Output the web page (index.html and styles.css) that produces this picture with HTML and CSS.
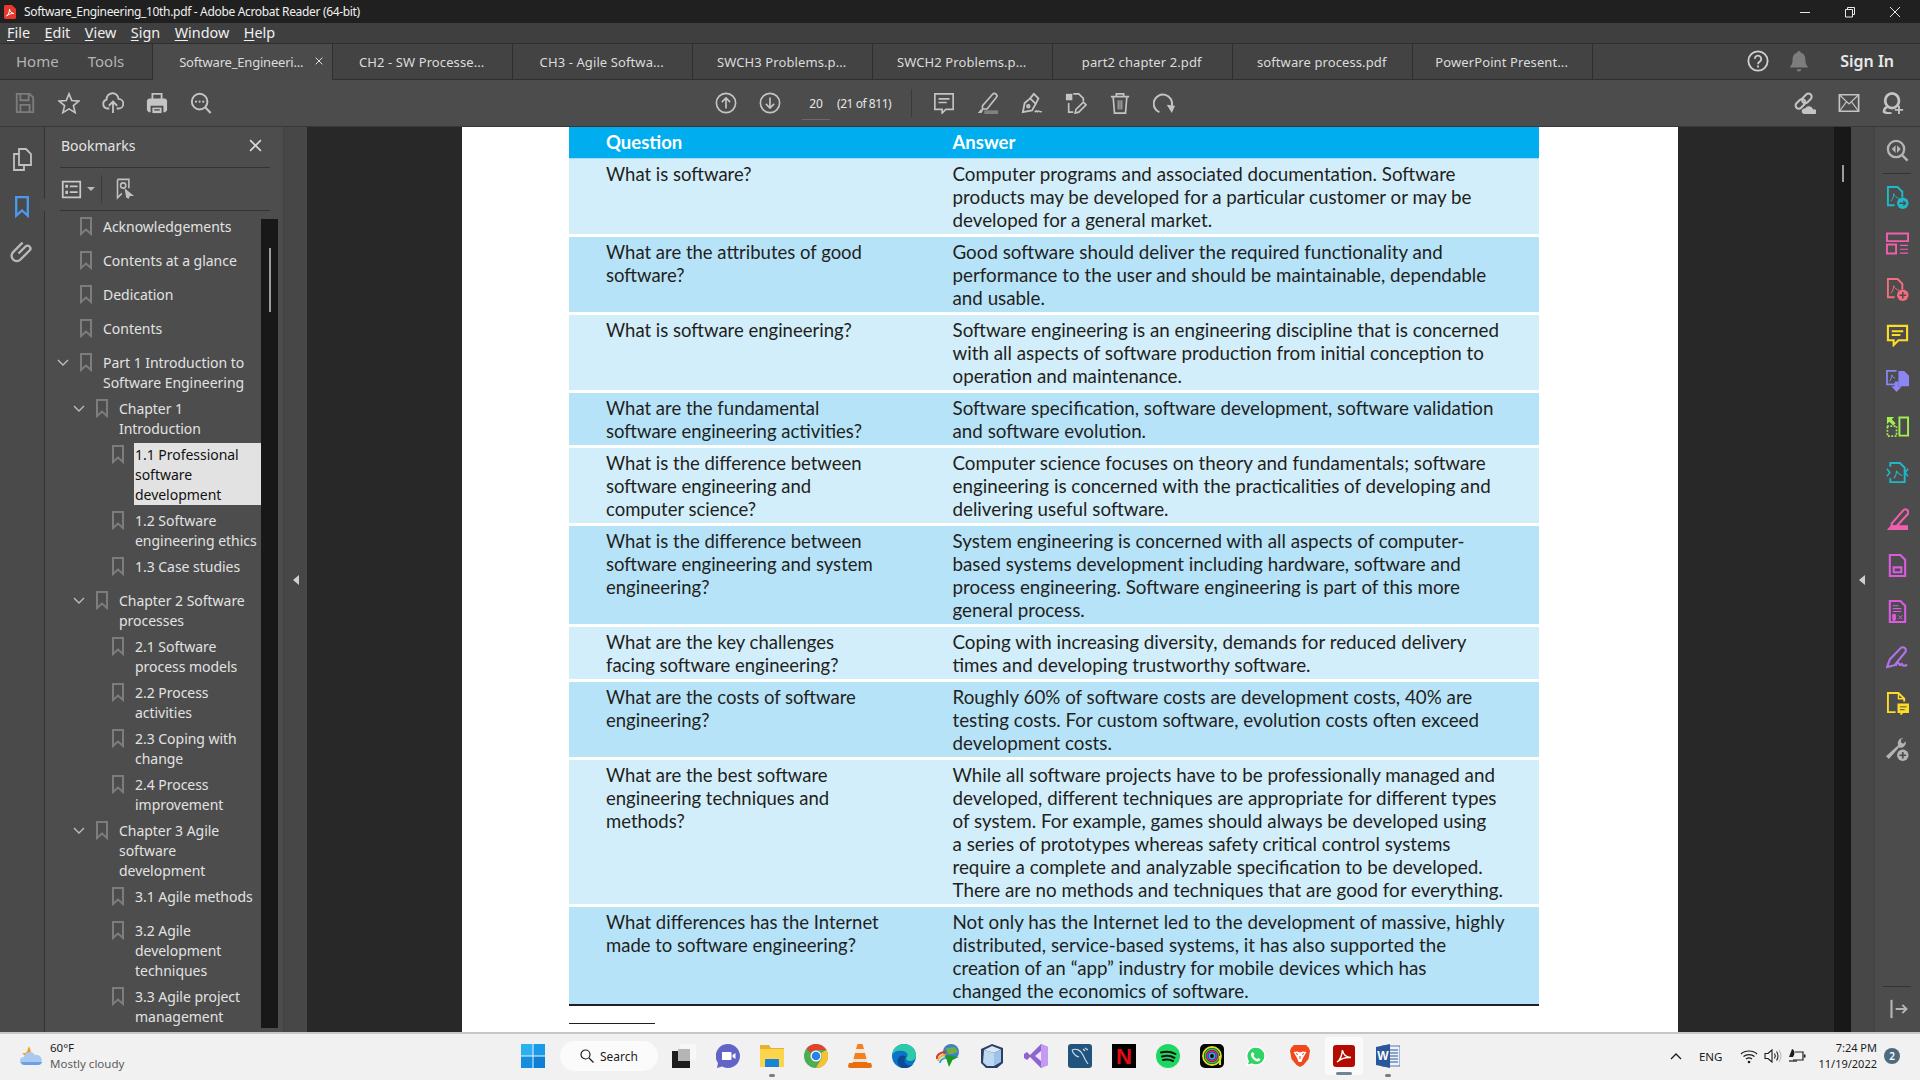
FILE: index.html
```html
<!DOCTYPE html>
<html lang="en">
<head>
<meta charset="utf-8">
<title>Software_Engineering_10th.pdf - Adobe Acrobat Reader (64-bit)</title>
<link rel="stylesheet" href="styles.css">
</head>
<body>
<svg class="defs" xmlns="http://www.w3.org/2000/svg">
  <symbol id="bm" viewBox="0 0 12 19"><path d="M1 1h10v16l-5-4.500L1 17z" fill="none" stroke="currentColor" stroke-width="2"/></symbol>
  <symbol id="chev" viewBox="0 0 12 7"><path d="M1 1l5 5 5-5" fill="none" stroke="currentColor" stroke-width="1.400"/></symbol>
  <symbol id="save" viewBox="0 0 24 24"><g fill="none" stroke="currentColor" stroke-width="2"><path d="M3 2h14l4 4v16H3z"/><path d="M7 2v7h9V2M7 22v-8h10v8"/></g></symbol>
  <symbol id="star" viewBox="0 0 24 24"><path d="M12 2l3 7.300 7.700.6-5.900 5 1.900 7.600L12 18.400 5.300 22.500l1.900-7.600-5.900-5L9 9.300z" fill="none" stroke="currentColor" stroke-width="1.800"/></symbol>
  <symbol id="cloud" viewBox="0 0 24 24"><g fill="none" stroke="currentColor" stroke-width="2"><path d="M8 18H6a5 5 0 0 1-1-9.800A6.500 6.500 0 0 1 18 7.500 5.200 5.200 0 0 1 18 18h-2"/><path d="M12 23V11M7.500 15l4.500-4.500 4.500 4.500"/></g></symbol>
  <symbol id="print" viewBox="0 0 24 24"><path d="M6 1h12v6h3l2 2v11l-2 2h-2v-7H5v7H3l-2-2V9l2-2h3zM8 3v4h8V3z" fill="currentColor" fill-rule="evenodd"/><path d="M7 17h10v6H7z" fill="currentColor"/><path d="M9 19.500h6" stroke="#4c4c4c" stroke-width="1.500"/></symbol>
  <symbol id="zoomdots" viewBox="0 0 24 24"><circle cx="10.500" cy="10.500" r="8.500" fill="none" stroke="currentColor" stroke-width="2.200"/><path d="M16.500 16.500l6 6.500" stroke="currentColor" stroke-width="2.400"/><circle cx="6.500" cy="10.500" r="1.200" fill="currentColor"/><circle cx="10.500" cy="10.500" r="1.200" fill="currentColor"/><circle cx="14.500" cy="10.500" r="1.200" fill="currentColor"/></symbol>
  <symbol id="up" viewBox="0 0 24 24"><circle cx="12" cy="12" r="10.500" fill="none" stroke="currentColor" stroke-width="1.800"/><path d="M12 18V6.500M7.500 11L12 6.500l4.500 4.500" fill="none" stroke="currentColor" stroke-width="1.800"/></symbol>
  <symbol id="down" viewBox="0 0 24 24"><circle cx="12" cy="12" r="10.500" fill="none" stroke="currentColor" stroke-width="1.800"/><path d="M12 6v11.500M7.500 13l4.500 4.500 4.500-4.500" fill="none" stroke="currentColor" stroke-width="1.800"/></symbol>
  <symbol id="comment" viewBox="0 0 24 24"><g fill="none" stroke="currentColor" stroke-width="1.800"><path d="M2 2h20v17h-8l-4 4v-4H2z"/><path d="M6 7.500h12M6 11.500h9"/></g></symbol>
  <symbol id="hl" viewBox="0 0 24 24"><path d="M6 15L17 2.500a2.500 2.500 0 0 1 4 3.500L11 18.500H6z" fill="none" stroke="currentColor" stroke-width="1.800"/><path d="M1 23l3-4h3l-2 4z" fill="currentColor"/><path d="M8 20h15v4H8z" fill="currentColor" opacity=".45"/></symbol>
  <symbol id="pen" viewBox="0 0 24 24"><g fill="none" stroke="currentColor" stroke-width="2"><path d="M2 22l2-10 6-5 6 6-4 7z"/><path d="M10 7l4-5 5 5-3 6"/><circle cx="8" cy="15.500" r="1.400"/><path d="M15 22c1-1 1.500-2 2-1s1 1 1.500 0 1 0 2 .5 1.500 0 2-.5" stroke-width="1.600"/></g></symbol>
  <symbol id="stamp" viewBox="0 0 24 24"><path d="M1 2h7v7H1z" fill="currentColor"/><g fill="none" stroke="currentColor" stroke-width="1.800"><path d="M9 2h6l5 5v3M4 12v10h5"/><path d="M11 23l1-4 8-8 3 3-8 8z"/></g></symbol>
  <symbol id="trash" viewBox="0 0 24 24"><g fill="none" stroke="currentColor" stroke-width="1.800"><path d="M2 5h20M8 5V2h8v3M4.500 5L6 23h12l1.500-18"/><path d="M10 9v10M12 9v10M14 9v10" stroke-width="1"/></g></symbol>
  <symbol id="rotate" viewBox="0 0 24 24"><path d="M7 22A10 10 0 1 1 20.500 15" fill="none" stroke="currentColor" stroke-width="2.200"/><path d="M15 14l5.500 9 3.500-8z" fill="currentColor"/></symbol>
  <symbol id="link" viewBox="0 0 24 24"><g fill="none" stroke="currentColor" stroke-width="2.200"><rect x="1" y="9.500" width="12" height="7" rx="3.500" transform="rotate(-45 7 13)"/><rect x="8" y="3.500" width="12" height="7" rx="3.500" transform="rotate(-45 14 7)"/></g><path d="M11 24a3 3 0 0 1 1-6 5 5 0 0 1 9 1 2.600 2.600 0 0 1 2 5z" fill="currentColor"/></symbol>
  <symbol id="mail" viewBox="0 0 24 24"><g fill="none" stroke="currentColor" stroke-width="1.800"><path d="M1.500 3h21v18h-21z"/><path d="M1.500 3L12 13 22.500 3M1.500 21L9 11M22.500 21L15 11" stroke-width="1.300"/></g></symbol>
  <symbol id="user" viewBox="0 0 24 24"><g fill="none" stroke="currentColor"><ellipse cx="11" cy="9.500" rx="7.500" ry="8" stroke-width="3"/><path d="M6 16c-3 1.500-4 3.500-4 5.500 2 1.500 5 2 8.500 2" stroke-width="2.600"/></g><path d="M18.500 15v9M14 19.500h9" stroke="currentColor" stroke-width="2"/></symbol>
  <symbol id="help" viewBox="0 0 24 24"><circle cx="12" cy="12" r="10.500" fill="none" stroke="currentColor" stroke-width="2"/><path d="M8.500 9.500a3.500 3.500 0 1 1 5.500 3c-1.500 1-2 1.500-2 3" fill="none" stroke="currentColor" stroke-width="2"/><path d="M11 17h2v2h-2z" fill="currentColor"/></symbol>
  <symbol id="bell" viewBox="0 0 24 24"><path d="M12 1a2 2 0 0 1 2 2c4 1 5 4 5 8 0 5 2 6 3 8H2c1-2 3-3 3-8 0-4 1-7 5-8a2 2 0 0 1 2-2zM9.500 21h5a2.500 2.500 0 0 1-5 0z" fill="currentColor"/></symbol>
  <symbol id="close" viewBox="0 0 12 12"><path d="M1 1l10 10M11 1L1 11" fill="none" stroke="currentColor" stroke-width="1.500"/></symbol>
  <symbol id="pages" viewBox="0 0 24 24"><g fill="none" stroke="currentColor" stroke-width="1.800"><path d="M9 18V2h7l5 5v11z"/><path d="M9 7H4v16h10v-5"/></g></symbol>
  <symbol id="clip" viewBox="0 0 24 24"><path d="M8.500 14.500l7-7a2.800 2.800 0 0 1 4 4l-9 9a5.200 5.200 0 0 1-7.400-7.400l9.500-9.500" fill="none" stroke="currentColor" stroke-width="2.400"/></symbol>
  <symbol id="listv" viewBox="0 0 24 24"><g fill="none" stroke="currentColor" stroke-width="2"><path d="M2 3h20v18H2z"/><path d="M10 8.500h9M10 15h9"/></g><path d="M5 6.500h3v3.500H5zM5 13.500h3V17H5z" fill="currentColor"/></symbol>
  <symbol id="bmgear" viewBox="0 0 24 24"><g fill="none" stroke="currentColor" stroke-width="1.800"><path d="M4 1h13v10M4 1v21l5-5"/><circle cx="10.500" cy="8" r="3"/></g><path d="M12 11l11 9-5 0-1 3-3-1z" fill="currentColor"/></symbol>

  <symbol id="r-zoom" viewBox="0 0 24 24"><circle cx="10.500" cy="10.500" r="8.500" fill="none" stroke="currentColor" stroke-width="2.400"/><path d="M16.500 16.500l6 6" stroke="currentColor" stroke-width="2.600"/><path d="M10 6.500v8L6 10.500zM11.500 6.500v8l4-4z" fill="currentColor"/></symbol>
  <symbol id="r-export" viewBox="0 0 24 24"><g fill="none" stroke="currentColor" stroke-width="2"><path d="M9 20H2V1h10l5 5v6"/><path d="M5 16c2-2 3-5 3-8 1 3 3 4 6 5" stroke-width="1"/></g><circle cx="17.500" cy="18" r="6" fill="currentColor"/><path d="M14 18h6M18 15.500l2.500 2.500-2.500 2.500" fill="none" stroke="#4c4c4c" stroke-width="1.400"/></symbol>
  <symbol id="r-layout" viewBox="0 0 24 24"><g fill="none" stroke="currentColor" stroke-width="2"><path d="M1 1.500h22v8H1zM1 13h9.500v9.500H1z"/><path d="M14.500 14h8.500M14.500 18h8.500M14.500 22h8.500" stroke-width="1.200"/></g></symbol>
  <symbol id="r-create" viewBox="0 0 24 24"><g fill="none" stroke="currentColor" stroke-width="2"><path d="M9 20H2V1h10l5 5v6"/><path d="M5 16c2-2 3-5 3-8 1 3 3 4 6 5" stroke-width="1"/></g><circle cx="17.500" cy="18" r="6" fill="currentColor"/><path d="M14 18h7M17.500 14.500v7" stroke="#4c4c4c" stroke-width="1.600"/></symbol>
  <symbol id="r-comment" viewBox="0 0 24 24"><g fill="none" stroke="currentColor" stroke-width="2.200"><path d="M2 2h20v15h-9l-5 5v-5H2z"/><path d="M6 7.500h12M6 11.500h9"/></g></symbol>
  <symbol id="r-compress" viewBox="0 0 24 24"><g fill="none" stroke="currentColor" stroke-width="1.800"><path d="M10 15H1V1h10"/><path d="M3.500 12c1.500-2 2.500-4 2.500-7 .5 2 1.500 3 3.500 3.500" stroke-width="1"/></g><path d="M13 1h6l5 5v11H13z" fill="currentColor"/><path d="M9 12h4v5h3.500L11 23 5.500 17H9z" fill="currentColor"/></symbol>
  <symbol id="r-crop" viewBox="0 0 24 24"><g fill="none" stroke="currentColor"><path d="M14 1.500h9v19h-9z" stroke-width="2"/><path d="M1.500 11v10h9.500V11" stroke-width="1.800" stroke-dasharray="2 1.500"/><path d="M1 10.500h9" stroke-width="1.800" stroke-dasharray="2 1.500"/></g><path d="M1 1l7.500 0-2.500 2.500L10 7.500 7.500 10 3.500 6 1 8.500z" fill="currentColor"/></symbol>
  <symbol id="r-redact" viewBox="0 0 24 24"><g fill="none" stroke="currentColor" stroke-width="2"><path d="M4.500 5V1h10l5 5v15h-15v-4"/><path d="M8 17c2-2 3-5 3-8 1 3 3 4 6 5" stroke-width="1.100"/><path d="M1 7l3 4-3 4M23 7l-3 4 3 4" stroke-width="1.600"/></g></symbol>
  <symbol id="r-hl" viewBox="0 0 24 24"><path d="M6 16L18 2.500a3 3 0 0 1 4.500 4L11 19H6z" fill="none" stroke="currentColor" stroke-width="2.200"/><path d="M1 23l4-5h18v5z" fill="currentColor"/></symbol>
  <symbol id="r-form" viewBox="0 0 24 24"><g fill="none" stroke="currentColor" stroke-width="2.200"><path d="M4 1h11l5 5v17H4z"/><path d="M8 14h8v5H8z"/></g></symbol>
  <symbol id="r-fill" viewBox="0 0 24 24"><g fill="none" stroke="currentColor" stroke-width="2.200"><path d="M4 1h11l5 5v17H4z"/><path d="M7 6h6M7 9h9M7 12h9" stroke-width="1.200"/></g><path d="M7 15h3v5l-1.500 2L7 20zM13 16l4 4M17 16l-4 4" fill="currentColor" stroke="currentColor" stroke-width="1"/></symbol>
  <symbol id="r-sign" viewBox="0 0 24 24"><g fill="none" stroke="currentColor" stroke-width="2.200"><path d="M1 22l3-8L15 2.500a3 3 0 0 1 5 4L9 20z"/><path d="M10 21c2-5 3-4 3.500-2.500s1.500 2 2.500.5 1 1 2 1.500 2 0 4-1"/></g></symbol>
  <symbol id="r-note" viewBox="0 0 24 24"><g fill="none" stroke="currentColor" stroke-width="2"><path d="M10 21H2V1h11l6 6v3"/><path d="M13 1v6h6" stroke-width="1.500"/></g><path d="M12 12h12v10h-6l-3 3v-3h-3z" fill="currentColor"/><path d="M14.500 15.500h7M14.500 18.500h5" stroke="#4c4c4c" stroke-width="1"/></symbol>
  <symbol id="r-tools" viewBox="0 0 24 24"><path d="M18.500 0a5.500 5.500 0 0 0-5.800 7.500L0 19l3 3L13.500 10a5.500 5.500 0 0 0 7-6.500L18 6l-2.500-1.500L16 1z" fill="currentColor"/><circle cx="17.500" cy="18" r="6" fill="currentColor"/><path d="M14 18h7M17.500 14.500v7" stroke="#4c4c4c" stroke-width="1.800"/></symbol>
  <symbol id="r-hide" viewBox="0 0 24 24"><path d="M3 1v22" stroke="currentColor" stroke-width="2.600" fill="none"/><path d="M8 12h13M16 7l5 5-5 5" stroke="currentColor" stroke-width="2.400" fill="none"/></symbol>
</svg>

<div class="app">
  <header class="titlebar">
    <svg class="title-ic" viewBox="0 0 12 14"><path d="M0 1l1-1h7l4 4v9l-1 1H1l-1-1z" fill="#e8372c"/><path d="M2.500 11c2-1.500 3-4 3-7 .3 2.500 1.500 4 4.500 4.500-3-.2-5.500.8-7.500 2.500z" fill="none" stroke="#fff" stroke-width="1"/></svg>
    <span class="title-text">Software_Engineering_10th.pdf - Adobe Acrobat Reader (64-bit)</span>
    <div class="winctl">
      <svg class="wc" viewBox="0 0 12 12"><path d="M1 6.500h10" stroke="#e8e8e8" stroke-width="1"/></svg>
      <svg class="wc" viewBox="0 0 12 12"><path d="M1.500 3.500h7v7.500h-7zM3.500 3.500V1.500h7v7h-2" fill="none" stroke="#e8e8e8" stroke-width="1"/></svg>
      <svg class="wc" viewBox="0 0 12 12"><path d="M1 1l10 10M11 1L1 11" stroke="#e8e8e8" stroke-width="1"/></svg>
    </div>
  </header>

  <nav class="menubar">
    <span class="menu"><u>F</u>ile</span>
    <span class="menu"><u>E</u>dit</span>
    <span class="menu"><u>V</u>iew</span>
    <span class="menu"><u>S</u>ign</span>
    <span class="menu"><u>W</u>indow</span>
    <span class="menu"><u>H</u>elp</span>
  </nav>

  <div class="tabbar">
    <span class="hometab t-home">Home</span>
    <span class="hometab t-tools">Tools</span>
    <div class="tab active"><span>Software_Engineeri...</span><svg class="tabx" viewBox="0 0 12 12"><use href="#close"/></svg></div>
    <div class="tab"><span>CH2 - SW Processe...</span></div>
    <div class="tab"><span>CH3 - Agile Softwa...</span></div>
    <div class="tab"><span>SWCH3 Problems.p...</span></div>
    <div class="tab"><span>SWCH2 Problems.p...</span></div>
    <div class="tab"><span>part2 chapter 2.pdf</span></div>
    <div class="tab"><span>software process.pdf</span></div>
    <div class="tab"><span>PowerPoint Present...</span></div>
    <div class="tab-right">
      <svg class="ti help"><use href="#help"/></svg>
      <svg class="ti bell"><use href="#bell"/></svg>
      <span class="signin">Sign In</span>
    </div>
  </div>

  <div class="toolbar">
    <div class="tgroup left">
      <div class="tbtn dim"><svg class="ti"><use href="#save"/></svg></div>
      <div class="tbtn"><svg class="ti"><use href="#star"/></svg></div>
      <div class="tbtn"><svg class="ti"><use href="#cloud"/></svg></div>
      <div class="tbtn"><svg class="ti"><use href="#print"/></svg></div>
      <div class="tbtn"><svg class="ti"><use href="#zoomdots"/></svg></div>
    </div>
    <div class="tgroup center">
      <div class="tbtn"><svg class="ti"><use href="#up"/></svg></div>
      <div class="tbtn"><svg class="ti"><use href="#down"/></svg></div>
      <span class="pageno">20</span>
      <span class="pagecount">(21 of 811)</span>
      <span class="tsep"></span>
      <div class="tbtn"><svg class="ti"><use href="#comment"/></svg></div>
      <div class="tbtn"><svg class="ti"><use href="#hl"/></svg></div>
      <div class="tbtn"><svg class="ti"><use href="#pen"/></svg></div>
      <div class="tbtn"><svg class="ti"><use href="#stamp"/></svg></div>
      <div class="tbtn"><svg class="ti"><use href="#trash"/></svg></div>
      <div class="tbtn"><svg class="ti"><use href="#rotate"/></svg></div>
    </div>
    <div class="tgroup right">
      <div class="tbtn"><svg class="ti"><use href="#link"/></svg></div>
      <div class="tbtn"><svg class="ti"><use href="#mail"/></svg></div>
      <div class="tbtn"><svg class="ti"><use href="#user"/></svg></div>
    </div>
  </div>

  <main class="main">
    <aside class="rail">
      <svg class="ri pages"><use href="#pages"/></svg>
      <svg class="ri bmk"><use href="#bm"/></svg>
      <svg class="ri clip"><use href="#clip"/></svg>
      <span class="notch"></span>
    </aside>

    <section class="panel">
      <div class="panel-head">
        <span class="panel-title">Bookmarks</span>
        <svg class="panel-x"><use href="#close"/></svg>
      </div>
      <div class="panel-tools">
        <svg class="pt-list"><use href="#listv"/></svg>
        <span class="pt-caret"></span>
        <span class="pt-sep"></span>
        <svg class="pt-gear"><use href="#bmgear"/></svg>
      </div>
      <div class="panel-body">
        <div class="tree">
          <div class="bm-item l0"><span class="chev"></span><svg class="bm-ic"><use href="#bm"/></svg><span class="bm-text">Acknowledgements</span></div>
          <div class="bm-item l0"><span class="chev"></span><svg class="bm-ic"><use href="#bm"/></svg><span class="bm-text">Contents at a glance</span></div>
          <div class="bm-item l0"><span class="chev"></span><svg class="bm-ic"><use href="#bm"/></svg><span class="bm-text">Dedication</span></div>
          <div class="bm-item l0"><span class="chev"></span><svg class="bm-ic"><use href="#bm"/></svg><span class="bm-text">Contents</span></div>
          <div class="bm-item l0"><span class="chev"><svg class="chev-ic"><use href="#chev"/></svg></span><svg class="bm-ic"><use href="#bm"/></svg><span class="bm-text">Part 1 Introduction to<br>Software Engineering</span></div>
          <div class="bm-item l1"><span class="chev"><svg class="chev-ic"><use href="#chev"/></svg></span><svg class="bm-ic"><use href="#bm"/></svg><span class="bm-text">Chapter 1<br>Introduction</span></div>
          <div class="bm-item l2"><span class="chev"></span><svg class="bm-ic"><use href="#bm"/></svg><span class="bm-text sel">1.1 Professional<br>software<br>development</span></div>
          <div class="bm-item l2"><span class="chev"></span><svg class="bm-ic"><use href="#bm"/></svg><span class="bm-text">1.2 Software<br>engineering ethics</span></div>
          <div class="bm-item l2"><span class="chev"></span><svg class="bm-ic"><use href="#bm"/></svg><span class="bm-text">1.3 Case studies</span></div>
          <div class="bm-item l1"><span class="chev"><svg class="chev-ic"><use href="#chev"/></svg></span><svg class="bm-ic"><use href="#bm"/></svg><span class="bm-text">Chapter 2 Software<br>processes</span></div>
          <div class="bm-item l2"><span class="chev"></span><svg class="bm-ic"><use href="#bm"/></svg><span class="bm-text">2.1 Software<br>process models</span></div>
          <div class="bm-item l2"><span class="chev"></span><svg class="bm-ic"><use href="#bm"/></svg><span class="bm-text">2.2 Process<br>activities</span></div>
          <div class="bm-item l2"><span class="chev"></span><svg class="bm-ic"><use href="#bm"/></svg><span class="bm-text">2.3 Coping with<br>change</span></div>
          <div class="bm-item l2"><span class="chev"></span><svg class="bm-ic"><use href="#bm"/></svg><span class="bm-text">2.4 Process<br>improvement</span></div>
          <div class="bm-item l1"><span class="chev"><svg class="chev-ic"><use href="#chev"/></svg></span><svg class="bm-ic"><use href="#bm"/></svg><span class="bm-text">Chapter 3 Agile<br>software<br>development</span></div>
          <div class="bm-item l2"><span class="chev"></span><svg class="bm-ic"><use href="#bm"/></svg><span class="bm-text">3.1 Agile methods</span></div>
          <div class="bm-item l2"><span class="chev"></span><svg class="bm-ic"><use href="#bm"/></svg><span class="bm-text">3.2 Agile<br>development<br>techniques</span></div>
          <div class="bm-item l2"><span class="chev"></span><svg class="bm-ic"><use href="#bm"/></svg><span class="bm-text">3.3 Agile project<br>management</span></div>
        </div>
        <div class="panel-scroll"><span class="panel-thumb"></span></div>
      </div>
    </section>

    <div class="strip strip-l"><span class="tri-l"></span></div>

    <div class="doc">
      <article class="page">
        <div class="row head"><div class="q">Question</div><div class="a">Answer</div></div>
        <div class="row light"><div class="q">What is software?</div><div class="a">Computer programs and associated documentation. Software<br>products may be developed for a particular customer or may be<br>developed for a general market.</div></div>
        <div class="row dark"><div class="q">What are the attributes of good<br>software?</div><div class="a">Good software should deliver the required functionality and<br>performance to the user and should be maintainable, dependable<br>and usable.</div></div>
        <div class="row light"><div class="q">What is software engineering?</div><div class="a">Software engineering is an engineering discipline that is concerned<br>with all aspects of software production from initial conception to<br>operation and maintenance.</div></div>
        <div class="row dark"><div class="q">What are the fundamental<br>software engineering activities?</div><div class="a">Software specification, software development, software validation<br>and software evolution.</div></div>
        <div class="row light"><div class="q">What is the difference between<br>software engineering and<br>computer science?</div><div class="a">Computer science focuses on theory and fundamentals; software<br>engineering is concerned with the practicalities of developing and<br>delivering useful software.</div></div>
        <div class="row dark"><div class="q">What is the difference between<br>software engineering and system<br>engineering?</div><div class="a">System engineering is concerned with all aspects of computer-<br>based systems development including hardware, software and<br>process engineering. Software engineering is part of this more<br>general process.</div></div>
        <div class="row light"><div class="q">What are the key challenges<br>facing software engineering?</div><div class="a">Coping with increasing diversity, demands for reduced delivery<br>times and developing trustworthy software.</div></div>
        <div class="row dark"><div class="q">What are the costs of software<br>engineering?</div><div class="a">Roughly 60% of software costs are development costs, 40% are<br>testing costs. For custom software, evolution costs often exceed<br>development costs.</div></div>
        <div class="row light"><div class="q">What are the best software<br>engineering techniques and<br>methods?</div><div class="a">While all software projects have to be professionally managed and<br>developed, different techniques are appropriate for different types<br>of system. For example, games should always be developed using<br>a series of prototypes whereas safety critical control systems<br>require a complete and analyzable specification to be developed.<br>There are no methods and techniques that are good for everything.</div></div>
        <div class="row dark last"><div class="q">What differences has the Internet<br>made to software engineering?</div><div class="a">Not only has the Internet led to the development of massive, highly<br>distributed, service-based systems, it has also supported the<br>creation of an “app” industry for mobile devices which has<br>changed the economics of software.</div></div>
        <div class="footrule"></div>
      </article>
    </div>

    <div class="vscroll"><span class="vthumb"></span></div>
    <div class="strip strip-r"><span class="tri-r"></span></div>

    <aside class="rrail">
      <svg class="rr c-gray"><use href="#r-zoom"/></svg>
      <span class="rr-line"></span>
      <svg class="rr c-teal"><use href="#r-export"/></svg>
      <svg class="rr c-pink"><use href="#r-layout"/></svg>
      <svg class="rr c-salmon"><use href="#r-create"/></svg>
      <svg class="rr c-yellow"><use href="#r-comment"/></svg>
      <svg class="rr c-peri"><use href="#r-compress"/></svg>
      <svg class="rr c-lime"><use href="#r-crop"/></svg>
      <svg class="rr c-teal"><use href="#r-redact"/></svg>
      <svg class="rr c-pink"><use href="#r-hl"/></svg>
      <svg class="rr c-mag"><use href="#r-form"/></svg>
      <svg class="rr c-mag"><use href="#r-fill"/></svg>
      <svg class="rr c-purple"><use href="#r-sign"/></svg>
      <svg class="rr c-yellow"><use href="#r-note"/></svg>
      <svg class="rr c-gray"><use href="#r-tools"/></svg>
      <span class="rr-line bottom"></span>
      <svg class="rr c-gray hide"><use href="#r-hide"/></svg>
    </aside>
  </main>

  <footer class="taskbar">
    <div class="weather">
      <svg class="w-ic" viewBox="0 0 24 20"><path d="M3 7c3 1 5 0 6-4 0-1 1-2 1-3 1 3 3 6 1 9-2 2-6 1-8-2z" fill="#f39a1f"/><path d="M5 19a4 4 0 0 1 0-8 6 6 0 0 1 11-2 5 5 0 0 1 3 10z" fill="#a9c9f2"/><path d="M5 19h14a4 4 0 0 0 4-3H2a4 4 0 0 0 3 3z" fill="#6b9fe6"/></svg>
      <div class="w-text"><span class="w-temp">60°F</span><span class="w-desc">Mostly cloudy</span></div>
    </div>
    <div class="apps">
      <div class="app-cell"><svg class="tk" viewBox="0 0 24 24"><path d="M0 0h11.500v11.500H0z" fill="#2bb0f0"/><path d="M12.500 0H24v11.500H12.500z" fill="#1c9aea"/><path d="M0 12.500h11.500V24H0z" fill="#148fe0"/><path d="M12.500 12.500H24V24H12.500z" fill="#0d7fd6"/></svg></div>
      <div class="search-pill"><svg class="s-ic" viewBox="0 0 14 14"><circle cx="5.500" cy="5.500" r="4.500" fill="none" stroke="#1c1c1c" stroke-width="1.200"/><path d="M9 9l4.500 4.500" stroke="#1c1c1c" stroke-width="1.200"/></svg><span>Search</span></div>
      <div class="app-cell"><svg class="tk" viewBox="0 0 24 24"><path d="M8 0h16v16H8z" fill="#f7f7f7"/><path d="M0 7h18v17H0z" fill="#1d1d1d"/><path d="M6 5h12v12H6z" fill="#b5b5b5"/></svg></div>
      <div class="app-cell"><svg class="tk" viewBox="0 0 24 24"><path d="M12 0a12 12 0 1 1-6 22.400L1 24l1-5A12 12 0 0 1 12 0z" fill="#6264c8"/><path d="M6 8h8.500a1 1 0 0 1 1 1v6a1 1 0 0 1-1 1H6z" fill="#fff"/><path d="M16.500 11l3-2v6l-3-2z" fill="#fff"/></svg></div>
      <div class="app-cell ind"><svg class="tk" viewBox="0 0 24 24"><path d="M0 1h9l2 3h13v19H0z" fill="#e9b12c"/><path d="M0 5h24v18H0z" fill="#fcd54c"/><path d="M5 16a1 1 0 0 1 1-1h12a1 1 0 0 1 1 1v7H5z" fill="#1784d4"/></svg></div>
      <div class="app-cell"><svg class="tk" viewBox="0 0 24 24"><circle cx="12" cy="12" r="12" fill="#4cae4f"/><path d="M12 0a12 12 0 0 1 10.400 6H12a6 6 0 0 0-5.200 3L2.600 4.500A12 12 0 0 1 12 0z" fill="#e3402f"/><path d="M22.400 6A12 12 0 0 1 12 24l5.200-9a6 6 0 0 0 0-6z" fill="#fbc02d"/><circle cx="12" cy="12" r="5.500" fill="#fff"/><circle cx="12" cy="12" r="4.300" fill="#2f7fe8"/></svg></div>
      <div class="app-cell"><svg class="tk" viewBox="0 0 24 24"><path d="M9.500 0h5l1.500 5H8z" fill="#f7801a"/><path d="M8 5h8l1 4H7z" fill="#eaeaea"/><path d="M7 9h10l1.500 6h-13z" fill="#f7801a"/><path d="M5.500 15h13l1 3h-15z" fill="#e5e5e5"/><path d="M1 19h4l-.5-1h15l-.5 1h4l1 3a2 2 0 0 1-2 2H2a2 2 0 0 1-2-2z" fill="#e96f0d"/></svg></div>
      <div class="app-cell"><svg class="tk" viewBox="0 0 24 24"><circle cx="12" cy="12" r="12" fill="#0c74c8"/><path d="M0 11C1 4 6 0 12 0c7 0 12 5 12 11 0 4-3 6-6 6-2 0-4-1-4-3 2-1 3-6-3-7-5-1-9 0-11 4z" fill="#2dc9a8"/><path d="M10 24c-4-2-6-7-3-11 2-2 5-2 7 0-1 1-2 3-1 6 2 3 6 3 9 1-3 3-8 5-12 4z" fill="#0a4b94"/></svg></div>
      <div class="app-cell"><svg class="tk" viewBox="0 0 24 24"><circle cx="15" cy="8" r="8" fill="#3f7fc4"/><path d="M10 4l9-1 3 5-6 2-4 0z" fill="#6fae45"/><path d="M1 15a9 6 0 0 1 9-7" fill="none" stroke="#d33" stroke-width="2"/><path d="M2 17a8 6 0 0 1 8-6" fill="none" stroke="#ecb620" stroke-width="2"/><path d="M4 19a6 5 0 0 1 6-5" fill="none" stroke="#3aa1e0" stroke-width="2"/><path d="M9 11l14 2-6 2-4 8z" fill="#1a9a24"/></svg></div>
      <div class="app-cell"><svg class="tk" viewBox="0 0 24 24"><path d="M12 0l11 4v15l-6 5H6l-5-5V5z" fill="#2c3e63"/><path d="M12 2l9 3.500-7 3.500-10-3z" fill="#d7e7f7"/><path d="M14 9l7-3.500V18l-7 4z" fill="#9cc3ea"/><path d="M4 6l10 3v13H7l-4-3.500z" fill="#bfd8f1"/></svg></div>
      <div class="app-cell"><svg class="tk" viewBox="0 0 24 24"><path d="M17 0l7 3v18l-7 3L6 13l-3 3-3-2V10l3-2 3 3z" fill="#8f63d0"/><path d="M17 0l7 3v18l-7 3z" fill="#c49af2"/><path d="M17 7v10l-6-5z" fill="#efe5fb"/></svg></div>
      <div class="app-cell"><svg class="tk" viewBox="0 0 24 24"><rect width="24" height="24" rx="3" fill="#20537d"/><path d="M4 6c4-2 9 0 11 5s3 6 5 9M4 6c1 3 3 6 7 7M17 4l3 2M15 5l2 2" fill="none" stroke="#cfe0ec" stroke-width="1.100"/></svg></div>
      <div class="app-cell"><svg class="tk" viewBox="0 0 24 24"><rect width="24" height="24" fill="#000"/><text class="tk-n" x="12" y="20" text-anchor="middle">N</text></svg></div>
      <div class="app-cell"><svg class="tk" viewBox="0 0 24 24"><circle cx="12" cy="12" r="12" fill="#1ed760"/><path d="M5 8.500c5-1.500 10-1 14.500 1.500M6 12.500c4-1 9-.8 12.500 1.300M7 16c3.500-.8 7-.5 10 1" fill="none" stroke="#111" stroke-width="2" stroke-linecap="round"/></svg></div>
      <div class="app-cell"><svg class="tk" viewBox="0 0 24 24"><rect width="24" height="24" rx="5" fill="#050505"/><g fill="none" stroke-width="1.800"><circle cx="12" cy="12" r="9" stroke="#d9e021"/><circle cx="12" cy="12" r="6.800" stroke="#39b54a"/><circle cx="12" cy="12" r="4.800" stroke="#ec1c8e"/><circle cx="12" cy="12" r="2.800" stroke="#29a9e0"/></g><path d="M20 12v9" stroke="#d9e021" stroke-width="2"/></svg></div>
      <div class="app-cell"><svg class="tk" viewBox="0 0 24 24"><path d="M12 3a9 9 0 0 1 0 18 9 9 0 0 1-4-1l-5 1.300L4.300 17A9 9 0 0 1 12 3z" fill="#2fd366" stroke="#fff" stroke-width="1.300"/><path d="M9 8l1.500 2.500-1 1.300c1 1.800 2 2.700 3.500 3.300l1.200-1.100 2.300 1.300c-.5 2-2.500 2.500-4 2-3-1-5-3.500-5.500-6-.3-1.500.5-3 2-3.300z" fill="#fff"/></svg></div>
      <div class="app-cell"><svg class="tk" viewBox="0 0 24 24"><path d="M6 1h12l3 3 1 3-1.500 8-5 6L12 23l-3.500-2-5-6L2 7l1-3z" fill="#f2481e"/><path d="M5.500 8l4-.5 2.500 1 2.500-1 4 .5-3 5-1 2-1 3h-3l-1-3-1-2z" fill="#fff"/><path d="M8 9.500l2 1M16 9.500l-2 1M12 12v3" stroke="#f2481e" stroke-width="1"/></svg></div>
      <div class="app-cell hover wide-ind"><svg class="tk" viewBox="0 0 24 24"><rect width="22" height="22" x="1" y="1" rx="3" fill="#b30b00"/><path d="M5 18c3-2 5-7 5.500-12 .5 4 3 7 8.500 7.500-5-.5-10 1-14 4.500z" fill="none" stroke="#fff" stroke-width="1.500"/></svg></div>
      <div class="app-cell ind"><svg class="tk" viewBox="0 0 24 24"><path d="M6 2h18v20H6z" fill="#eef3fa" stroke="#2b579a" stroke-width=".8"/><path d="M14 6h8M14 9h8M14 12h8M14 15h8M14 18h8" stroke="#2b579a" stroke-width="1"/><path d="M0 3l14-3v24L0 21z" fill="#2b579a"/><text class="tk-w" x="7" y="16" text-anchor="middle">W</text></svg></div>
    </div>
    <div class="tray">
      <svg class="tr-chev" viewBox="0 0 12 7"><path d="M1 6l5-5 5 5" fill="none" stroke="#1c1c1c" stroke-width="1.300"/></svg>
      <span class="tr-lang">ENG</span>
      <svg class="tr-ic" viewBox="0 0 18 16"><g fill="none" stroke="#1c1c1c" stroke-width="1.200"><path d="M1 6c4-4 12-4 16 0M3.500 8.500c3-2.500 8-2.500 11 0M6 11c2-1.500 4-1.500 6 0"/></g><circle cx="9" cy="14" r="1.300" fill="#1c1c1c"/></svg>
      <svg class="tr-ic" viewBox="0 0 18 16"><path d="M1 5.500h3L8 2v12l-4-3.500H1z" fill="none" stroke="#1c1c1c" stroke-width="1.100"/><path d="M10.500 5.500c1 1.500 1 3.500 0 5M12.500 3.500c2 2.500 2 6.500 0 9" fill="none" stroke="#1c1c1c" stroke-width="1.100"/><path d="M15 2c2.500 3.500 2.500 8.500 0 12" fill="none" stroke="#bbb" stroke-width="1.100"/></svg>
      <svg class="tr-ic" viewBox="0 0 18 16"><path d="M7 4h8v8H5" fill="none" stroke="#1c1c1c" stroke-width="1.200"/><path d="M16 6.500h1.500v3H16z" fill="#1c1c1c"/><path d="M1 9l3-8c3 1 3 5 1 8z" fill="#1c1c1c"/><path d="M1 13h8" stroke="#1c1c1c" stroke-width="1.200"/></svg>
      <div class="clock"><span>7:24 PM</span><span>11/19/2022</span></div>
      <span class="badge">2</span>
    </div>
  </footer>
</div>
</body>
</html>
```

FILE: styles.css
```css
* { box-sizing: border-box; }
html, body { margin: 0; height: 100%; overflow: hidden; }
body { font-family: "Noto Sans", "Open Sans", sans-serif; color: #e6e6e6; background: #282828; }
.defs { display: none; }
.app { display: flex; flex-direction: column; height: 1080px; width: 1920px; }

/* title bar */
.titlebar { height: 23px; flex: none; background: #202020; display: flex; align-items: center; padding-left: 4px; }
.title-ic { width: 12px; height: 14px; margin-right: 8px; }
.title-text { font-size: 12px; color: #f0f0f0; line-height: 23px; letter-spacing: -.33px; }
.winctl { margin-left: auto; display: flex; padding-right: 19px; }
.wc { width: 12px; height: 12px; margin-left: 33px; }

/* menu */
.menubar { height: 21px; flex: none; background: #3f3f3f; border-bottom: 1px solid #2f2f2f; display: flex; gap: 14.500px; padding-left: 7px; font-size: 14.400px; line-height: 20px; color: #f0f0f0; }
.menu { display: block; }
.menu u { text-underline-offset: 2px; }

/* tabs */
.tabbar { height: 36px; flex: none; background: #434343; border-bottom: 1px solid #2f2f2f; display: flex; align-items: stretch; }
.hometab { font-size: 15px; color: #b4b4b4; line-height: 35px; }
.t-home { margin-left: 16px; }
.t-tools { margin-left: 29px; margin-right: 28px; }
.tab { width: 180px; border-left: 1px solid #2f2f2f; display: flex; align-items: center; justify-content: center; padding-right: 2px; font-size: 13px; letter-spacing: .1px; color: #dcdcdc; position: relative; }
.tab.active { background: #4b4b4b; margin-bottom: -1px; justify-content: flex-start; padding-left: 26px; letter-spacing: -.2px; }
.tabx { position: absolute; right: 9px; top: 13px; width: 8px; height: 8px; color: #e0e0e0; }
.tab-right { flex: 1; border-left: 1px solid #2f2f2f; display: flex; align-items: center; position: relative; }
.help { position: absolute; left: 154px; top: 6px; color: #d0d0d0; }
.bell { position: absolute; left: 195px; top: 6px; color: #7d7d7d; }
.signin { position: absolute; left: 247px; top: 0; line-height: 34px; font-size: 16px; font-weight: 600; color: #e8e8e8; }

/* toolbar */
.toolbar { height: 47px; flex: none; background: #4c4c4c; border-bottom: 1px solid #383838; display: flex; align-items: center; }
.tgroup { display: flex; align-items: center; }
.tgroup.left { margin-left: 3px; width: 701px; }
.tgroup.right { margin-left: auto; margin-right: 5px; }
.tbtn { width: 44px; height: 46px; display: flex; align-items: center; justify-content: center; color: #c4c4c4; }
.tbtn.dim { color: #7c7c7c; }
.ti { width: 22px; height: 22px; display: block; }
.pageno { width: 28px; margin-left: 10px; margin-top: 2px; text-align: center; font-size: 12px; line-height: 30px; color: #e6e6e6; border-bottom: 1px solid #6a6a6a; }
.pagecount { margin-left: 7px; width: 60px; font-size: 12px; color: #e6e6e6; letter-spacing: -.45px; white-space: nowrap; }
.tsep { width: 1px; height: 28px; background: #393939; margin-left: 14px; margin-right: 10px; }

/* main */
.main { flex: 1; min-height: 0; display: flex; overflow: hidden; background: #282828; }
.rail { width: 45px; flex: none; background: #4a4a4a; border-right: 1px solid #333; position: relative; display: flex; flex-direction: column; align-items: center; padding-top: 20px; }
.ri { width: 24px; height: 24px; flex: none; color: #c0c0c0; }
.ri.bmk { width: 14px; height: 22px; margin-top: 25px; color: #4a9bf0; }
.ri.clip { margin-top: 21px; color: #b8b8b8; }
.notch { position: absolute; right: -1px; top: 71px; width: 8px; height: 14px; background: #4d4d4d; clip-path: polygon(100% 0, 0 50%, 100% 100%); }

.panel { width: 239px; flex: none; background: #4d4d4d; display: flex; flex-direction: column; border-right: 1px solid #414141; }
.panel-head { height: 41px; flex: none; margin: 0 13px 0 15px; padding: 0 8px 3px 1px; border-bottom: 1px solid #333; display: flex; align-items: center; justify-content: space-between; }
.panel-title { font-size: 14px; color: #e4e4e4; }
.panel-x { width: 13px; height: 13px; color: #d8d8d8; }
.panel-tools { height: 43px; flex: none; margin: 0 13px 0 15px; border-bottom: 1px solid #333; display: flex; align-items: center; padding-left: 1px; }
.pt-list { width: 21px; height: 21px; color: #c8c8c8; }
.pt-caret { width: 0; height: 0; border: 4px solid transparent; border-top: 4px solid #b8b8b8; border-bottom: 0; margin-left: 5px; margin-right: 6px; }
.pt-sep { width: 1px; height: 28px; background: #393939; margin-right: 12px; }
.pt-gear { width: 21px; height: 24px; color: #c0c0c0; }
.panel-body { flex: 1; min-height: 0; display: flex; }
.tree { width: 216px; flex: none; overflow: hidden; padding-top: 3px; }
.bm-item { display: flex; min-height: 34px; padding-top: 3px; padding-bottom: 3px; }
.bm-item.l0 { padding-left: 10px; }
.bm-item.l1 { padding-left: 26px; }
.bm-item.l2 { padding-left: 42px; }
.chev { width: 25px; flex: none; display: block; padding-top: 6px; padding-left: 2px; }
.chev-ic { width: 12px; height: 7px; display: block; color: #bcbcbc; }
.bm-ic { width: 12px; height: 19px; flex: none; margin-right: 11px; color: #7d7d7d; }
.bm-text { flex: 1; font-size: 14px; line-height: 20px; color: #e2e2e2; white-space: nowrap; letter-spacing: -.03px; }
.bm-text.sel { background: #e2e2e2; color: #111; margin: -2px 0 0 -1px; padding: 2px 0 0 1px; }
.panel-scroll { width: 17px; flex: none; background: #181818; margin-top: 8px; margin-bottom: 4px; position: relative; }
.panel-thumb { position: absolute; left: 8px; top: 29px; width: 2px; height: 64px; background: #9c9c9c; }
.strip { width: 23px; flex: none; background: #474747; display: flex; align-items: center; }
.tri-l { width: 0; height: 0; border: 5px solid transparent; border-right: 6px solid #cfcfcf; border-left: 0; margin-left: 9px; }
.tri-r { width: 0; height: 0; border: 5px solid transparent; border-right: 6px solid #cfcfcf; border-left: 0; margin-left: 8px; }

/* document */
.doc { flex: 1; min-width: 0; display: flex; justify-content: center; background: #282828; overflow: hidden; }
.page { width: 1216px; flex: none; margin-left: -1px; background: #fff; padding: 0 139px 0 107px; font-family: "Lato", "Noto Sans", sans-serif; font-size: 18.800px; line-height: 23px; color: #231f20; }
.row { display: grid; grid-template-columns: 383.500px 1fr; padding: 3px 0; margin-bottom: 3px; white-space: nowrap; }
.row .q { padding-left: 37px; padding-top: 1px; margin-bottom: -1px; font-size: 18.500px; }
.row.head { background: #00aeef; color: #fff; font-weight: 700; height: 31px; padding: 1px 0 0; margin-bottom: 0; font-size: 18.500px; line-height: 28px; box-shadow: 0 1px 0 #a7dcf5; }
.row.head .q { padding-top: 0; margin-bottom: 0; }
.row.head + .row { margin-top: 1px; }
.row.light { background: #d2eefb; }
.row.dark { background: #b7e3f9; }
.row.last { margin-bottom: 0; border-bottom: 2px solid #231f20; padding-bottom: 2px; }
.footrule { width: 86px; height: 1px; background: #231f20; margin-top: 17px; }

.vscroll { width: 17px; flex: none; background: #181818; position: relative; }
.vthumb { position: absolute; left: 8px; top: 38px; width: 2px; height: 17px; background: #9c9c9c; }
.rrail { width: 46px; flex: none; background: #4c4c4c; border-left: 1px solid #414141; display: flex; flex-direction: column; align-items: center; padding-top: 12px; padding-right: 1px; }
.rr { width: 23px; height: 23px; flex: none; margin-bottom: 23px; }
.rr-line { width: 28px; height: 1px; background: #333; margin-top: -12px; margin-bottom: 12px; flex: none; }
.rr-line.bottom { margin-top: auto; margin-bottom: 12px; }
.rr.hide { width: 20px; height: 20px; margin-bottom: 13px; margin-left: 4px; }
.c-gray { color: #b4b4b4; }
.c-teal { color: #1fb9c9; }
.c-pink { color: #f05fae; }
.c-salmon { color: #f56c7c; }
.c-yellow { color: #fddc28; }
.c-peri { color: #8b86f4; }
.c-lime { color: #a3ee4f; }
.c-mag { color: #d85be0; }
.c-purple { color: #b272ea; }

/* taskbar */
.taskbar { height: 48px; flex: none; background: #f1f1f1; border-top: 2px solid #c6c6c6; display: flex; align-items: center; color: #1c1c1c; position: relative; }
.weather { width: 511px; flex: none; display: flex; align-items: center; padding-left: 19px; padding-bottom: 2px; }
.w-ic { width: 24px; height: 20px; margin-right: 7px; }
.w-text { display: flex; flex-direction: column; font-size: 11.500px; line-height: 16px; }
.w-temp { color: #1c1c1c; }
.w-desc { color: #5c5c5c; }
.apps { display: flex; align-items: center; height: 46px; margin-top: -2px; }
.app-cell { width: 44px; height: 46px; display: flex; align-items: center; justify-content: center; position: relative; }
.tk { width: 24px; height: 24px; display: block; }
.search-pill { width: 98px; height: 30px; margin: 0 4px 0 5px; background: #fbfbfb; border-radius: 15px; display: flex; align-items: center; justify-content: center; gap: 6px; font-size: 12px; color: #1c1c1c; }
.s-ic { width: 14px; height: 14px; }
.ind::after { content: ""; position: absolute; left: 19px; bottom: 2px; width: 6px; height: 3px; border-radius: 2px; background: #7d7d7d; }
.hover { background: #fafafa; width: 38px; height: 38px; margin: 0 3px; border-radius: 4px; }
.wide-ind::after { content: ""; position: absolute; left: 11px; bottom: 0; width: 16px; height: 3px; border-radius: 2px; background: #6d8596; }
.tk-n { font-family: "Liberation Sans", sans-serif; font-weight: 700; font-size: 22px; fill: #e50914; }
.tk-w { font-family: "Liberation Sans", sans-serif; font-weight: 700; font-size: 12px; fill: #fff; }
.tray { margin-left: auto; display: flex; align-items: center; padding-right: 20px; padding-bottom: 2px; }
.tr-chev { width: 12px; height: 7px; margin-right: 17px; }
.tr-lang { font-size: 11.500px; margin-right: 18px; }
.tr-ic { width: 18px; height: 16px; margin-right: 6px; }
.clock { display: flex; flex-direction: column; align-items: flex-end; font-size: 11px; line-height: 16px; margin-left: 6px; margin-right: 7px; }
.badge { width: 16px; height: 16px; border-radius: 50%; background: #4d6a7e; color: #fff; font-size: 10px; line-height: 16px; text-align: center; font-weight: 600; }
```
